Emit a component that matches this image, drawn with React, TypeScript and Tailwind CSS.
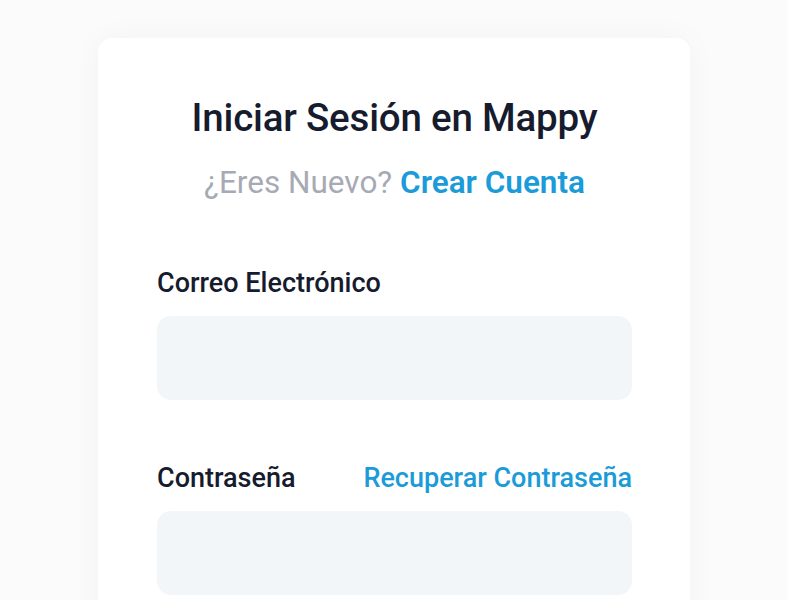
import React from 'react';

const App: React.FC = () => {
  return (
    <div className="min-h-screen bg-[#fbfbfc] pt-[38px] flex justify-center" style={{ fontFamily: 'Roboto, "Noto Sans", sans-serif' }}>
      <div className="w-[592px] bg-white rounded-[14px] shadow-[0_0_30px_rgba(0,0,0,0.04)] pl-[59px] pr-[58px] pt-[56px] pb-10 ml-[1px]">
        {/* Header */}
        <h1 className="text-center text-[38.5px] leading-[48px] font-medium text-[#161b2e] tracking-[-0.2px]">
          Iniciar Sesión en Mappy
        </h1>
        <p className="mt-[21px] text-center text-[31.5px] leading-[40px] text-[#a7aab4]">
          ¿Eres Nuevo? <a href="#" className="font-semibold text-[#1b9bd8]">Crear Cuenta</a>
        </p>

        {/* Email */}
        <label className="block mt-[62px] text-[27px] leading-[36px] font-medium text-[#161b2e]">
          Correo Electrónico
        </label>
        <input type="email" className="mt-[15px] block w-full h-[84px] rounded-[14px] bg-[#f3f6f9] outline-none px-5" />

        {/* Password */}
        <div className="mt-[60px] flex items-center justify-between">
          <label className="text-[27px] leading-[36px] font-medium text-[#161b2e]">Contraseña</label>
          <a href="#" className="text-[27px] leading-[36px] font-medium text-[#1b9bd8]">Recuperar Contraseña</a>
        </div>
        <input type="password" className="mt-[15px] block w-full h-[84px] rounded-[14px] bg-[#f3f6f9] outline-none px-5" />
      </div>
    </div>
  );
};

export default App;
